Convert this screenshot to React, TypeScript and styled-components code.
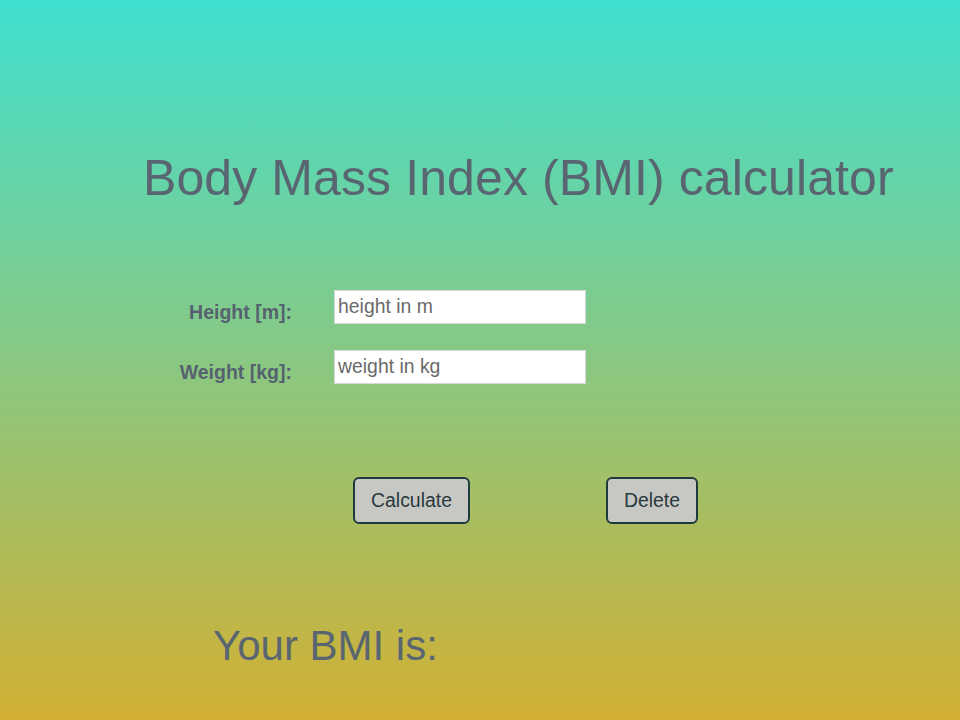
import React from "react";
import styled, { createGlobalStyle } from "styled-components";

const Global = createGlobalStyle`
  html, body { margin: 0; padding: 0; }
  body {
    min-height: 720px;
    background: linear-gradient(to bottom, #40e0d0, #d2b034);
    font-family: "Liberation Sans", Arial, sans-serif;
  }
`;

const Page = styled.div`
  width: 960px;
  height: 720px;
  display: flex;
  flex-direction: column;
  color: #596570;
`;

const Title = styled.h1`
  margin: 148px 0 0 143px;
  font-size: 50px;
  font-weight: normal;
  line-height: 60px;
  letter-spacing: 0.1px;
`;

const Form = styled.div`
  margin: 81px 0 0 0;
  display: grid;
  grid-template-columns: 292px 252px;
  column-gap: 42px;
  row-gap: 25px;
  align-items: center;
`;

const Label = styled.label`
  justify-self: end;
  font-size: 19.5px;
  font-weight: bold;
  padding-top: 12px;
  color: #566270;
`;

const Input = styled.input`
  box-sizing: border-box;
  width: 252px;
  height: 34px;
  border: 1px solid #d8d8d8;
  background: #fff;
  font-family: "Liberation Sans", Arial, sans-serif;
  font-size: 19.4px;
  padding: 0 3px 1px;
  outline: none;
  &::placeholder { color: #6a6a6a; }
`;

const Buttons = styled.div`
  margin: 93px 0 0 353px;
  display: flex;
  gap: 136px;
`;

const Button = styled.button<{ $w: number }>`
  box-sizing: border-box;
  width: ${(p) => p.$w}px;
  height: 47px;
  border: 2px solid #1f3b3d;
  border-radius: 6px;
  background: #c7c8c4;
  color: #27393d;
  font-family: "Liberation Sans", Arial, sans-serif;
  font-size: 19.4px;
  padding: 0;
`;

const Result = styled.div`
  margin: 97px 0 0 213px;
  font-size: 42px;
  line-height: 50px;
`;

export default function App() {
  return (
    <>
      <Global />
      <Page>
        <Title>Body Mass Index (BMI) calculator</Title>
        <Form>
          <Label htmlFor="h">Height [m]:</Label>
          <Input id="h" placeholder="height in m" />
          <Label htmlFor="w">Weight [kg]:</Label>
          <Input id="w" placeholder="weight in kg" />
        </Form>
        <Buttons>
          <Button $w={117}>Calculate</Button>
          <Button $w={92}>Delete</Button>
        </Buttons>
        <Result>Your BMI is:</Result>
      </Page>
    </>
  );
}
